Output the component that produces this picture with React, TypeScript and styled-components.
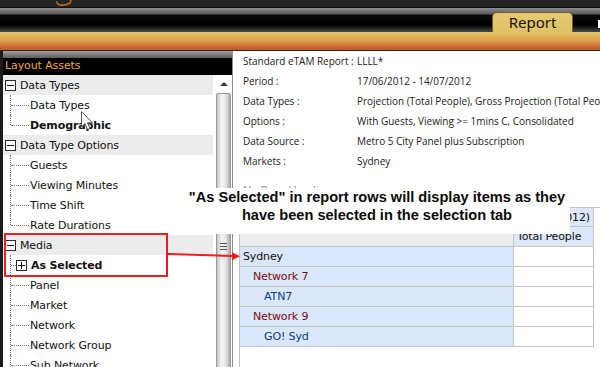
import React from "react";
import styled, { createGlobalStyle } from "styled-components";

const Global = createGlobalStyle`
  html, body { margin: 0; padding: 0; background: #ffffff; }
  #root { width: 600px; height: 367px; }
`;

const Frame = styled.div`
  position: relative;
  width: 600px;
  height: 367px;
  overflow: hidden;
  display: flex;
  flex-direction: column;
  background: #ffffff;
  font-family: "DejaVu Sans", sans-serif;
`;

const TitleStrip = styled.div`
  height: 7px;
  background: #232323;
  border-bottom: 1px solid #0e0e0e;
  display: flex;
  padding-left: 54px;
`;

const TabStrip = styled.div`
  height: 24px;
  display: flex;
  justify-content: flex-end;
  align-items: flex-end;
  background: linear-gradient(
    #8e8e8e 0px,
    #5a5a5a 6px,
    #0a0a0a 7px,
    #000000 17px,
    #4a4a4a 24px
  );
`;

const Tab = styled.div`
  box-sizing: border-box;
  width: 81px;
  height: 20px;
  background: linear-gradient(#e6c972, #e0c168);
  border: 1px solid #7a5c22;
  border-bottom: none;
  border-radius: 5px 5px 0 0;
  font-family: "Noto Sans", sans-serif;
  font-size: 15px;
  line-height: 19px;
  text-align: center;
  color: #141414;
`;

const EdgeMark = styled.div`
  align-self: flex-start;
  margin: 12px 0 0 25px;
  width: 2px;
  height: 8px;
  background: #ffffff;
`;

const OrangeBand = styled.div`
  height: 18px;
  background: linear-gradient(#e7c66a 0%, #e0a452 45%, #c9652e 85%, #c25a28 100%);
  border-bottom: 1px solid #2a2a2a;
`;

const Main = styled.div`
  flex: 1;
  display: flex;
  min-height: 0;
`;

const LeftPanel = styled.div`
  box-sizing: border-box;
  width: 232px;
  flex: none;
  border-left: 3px solid #1c1c1c;
  display: flex;
  flex-direction: column;
  background: #ffffff;
`;

const PanelBevel = styled.div`
  height: 7px;
  background: linear-gradient(#a0a0a0, #5c5c5c);
`;

const PanelTitle = styled.div`
  height: 17px;
  background: #000000;
  color: #f3a445;
  font-size: 11px;
  letter-spacing: -0.1px;
  line-height: 15px;
  padding-left: 2px;
`;

const TreeArea = styled.div`
  flex: 1;
  display: flex;
  min-height: 0;
  overflow: hidden;
`;

const Tree = styled.div`
  width: 210px;
  flex: none;
  display: flex;
  flex-direction: column;
`;

const GroupRow = styled.div`
  height: 20px;
  flex: none;
  display: flex;
  align-items: center;
  gap: 4px;
  padding-left: 2px;
  background: #ececec;
  font-size: 11px;
  letter-spacing: -0.12px;
  color: #111;
`;

const Box = styled.span<{ $plus?: boolean }>`
  box-sizing: border-box;
  width: 11px;
  height: 11px;
  border: 1px solid #2a2a2a;
  background: #fff;
  position: relative;
  flex: none;
  &::before {
    content: "";
    position: absolute;
    left: 1px;
    right: 1px;
    top: 4px;
    height: 1px;
    background: #111;
  }
  &::after {
    content: "";
    display: ${(p) => (p.$plus ? "block" : "none")};
    position: absolute;
    top: 1px;
    bottom: 1px;
    left: 4px;
    width: 1px;
    background: #111;
  }
`;

const ChildRow = styled.div<{ $last?: boolean; $bold?: boolean; $box?: boolean }>`
  height: 20px;
  flex: none;
  position: relative;
  display: flex;
  align-items: center;
  padding-left: ${(p) => (p.$box ? "13px" : "27px")};
  gap: 4px;
  font-size: 11px;
  letter-spacing: -0.12px;
  font-weight: ${(p) => (p.$bold ? 700 : 400)};
  color: #111;
  &::before {
    content: "";
    position: absolute;
    left: 7px;
    top: 0;
    height: ${(p) => (p.$last ? "10px" : "20px")};
    border-left: 1px dotted #7a7a7a;
  }
  &::after {
    content: "";
    position: absolute;
    left: 8px;
    top: 10px;
    width: ${(p) => (p.$box ? "5px" : "18px")};
    border-top: 1px dotted #7a7a7a;
  }
`;

const Scrollbar = styled.div`
  width: 16px;
  margin-left: 3px;
  flex: none;
  display: flex;
  flex-direction: column;
  background: #ffffff;
`;

const ArrowButton = styled.div`
  height: 18px;
  flex: none;
  display: flex;
  align-items: center;
  justify-content: center;
  &::before {
    content: "";
    width: 0;
    height: 0;
    border-left: 4px solid transparent;
    border-right: 4px solid transparent;
    border-bottom: 4px solid #3a3a3a;
  }
`;

const Thumb = styled.div`
  box-sizing: border-box;
  height: 306px;
  flex: none;
  margin: 0 1px 0 0;
  border: 1px solid #9a9a9a;
  border-radius: 2px;
  background: linear-gradient(90deg, #c4c4c4 0%, #f6f6f6 35%, #e4e4e4 70%, #a8a8a8 100%);
  display: flex;
  align-items: center;
  justify-content: center;
`;

const Grip = styled.div`
  width: 7px;
  height: 7px;
  background: repeating-linear-gradient(#555 0px, #555 1px, transparent 1px, transparent 3px);
`;

const Content = styled.div`
  flex: 1;
  display: flex;
  flex-direction: column;
  border-left: 1px solid #8c8c8c;
  padding-left: 10px;
  font-family: "Open Sans", sans-serif;
  min-width: 0;
  overflow: hidden;
`;

const InfoRow = styled.div`
  height: 20px;
  flex: none;
  display: flex;
  align-items: center;
  font-size: 10px;
  letter-spacing: -0.02px;
  color: #1a1a1a;
  white-space: nowrap;
`;

const InfoLabel = styled.span`
  width: 114px;
  flex: none;
`;

const NoHeadings = styled.div`
  height: 36px;
  flex: none;
  box-sizing: border-box;
  padding-top: 10px;
  line-height: 18px;
  font-size: 11px;
  color: #8a8a8a;
`;

const TableWrap = styled.div`
  flex: 1;
  margin-left: -4px;
  border-left: 1px solid #c4c4c4;
  display: flex;
  flex-direction: column;
  font-family: "DejaVu Sans", sans-serif;
  font-size: 11px;
  letter-spacing: -0.12px;
`;

const TRow = styled.div<{ $first?: boolean }>`
  display: grid;
  grid-template-columns: 274px 80px;
  height: 20px;
  flex: none;
  box-sizing: border-box;
  border-top: ${(p) => (p.$first ? "1px solid #c4c4c4" : "none")};
`;

const Cell = styled.div<{ $bg: string; $indent?: number; $color?: string; $right?: boolean }>`
  box-sizing: border-box;
  border-right: 1px solid #c4c4c4;
  border-bottom: 1px solid #c4c4c4;
  background: ${(p) => p.$bg};
  color: ${(p) => p.$color || "#111"};
  padding-left: ${(p) => 3 + (p.$indent || 0)}px;
  padding-right: 3px;
  display: flex;
  align-items: center;
  justify-content: ${(p) => (p.$right ? "flex-end" : "flex-start")};
  white-space: nowrap;
  overflow: hidden;
`;

const Callout = styled.div`
  position: absolute;
  left: 184px;
  top: 188px;
  width: 386px;
  height: 46px;
  background: #ffffff;
  font-family: "Liberation Sans", Arial, sans-serif;
  font-weight: 700;
  font-size: 14.6px;
  line-height: 18px;
  text-align: center;
  white-space: nowrap;
  color: #0a0a0a;
`;

const Overlay = styled.svg`
  position: absolute;
  left: 0;
  top: 0;
  pointer-events: none;
`;

const Cursor = styled.svg`
  position: absolute;
  left: 81px;
  top: 111px;
  pointer-events: none;
`;

const dataGroup = ["Data Types", "Demographic"];
const optionGroup = ["Guests", "Viewing Minutes", "Time Shift", "Rate Durations"];
const mediaGroup = ["Panel", "Market", "Network", "Network Group", "Sub Network"];

const info: [string, string][] = [
  ["Standard eTAM Report :", "LLLL*"],
  ["Period :", "17/06/2012 - 14/07/2012"],
  ["Data Types :", "Projection (Total People), Gross Projection (Total People)"],
  ["Options :", "With Guests, Viewing >= 1mins C, Consolidated"],
  ["Data Source :", "Metro 5 City Panel plus Subscription"],
  ["Markets :", "Sydney"],
];

const rows: { label: string; indent: number; color: string }[] = [
  { label: "Sydney", indent: 0, color: "#111111" },
  { label: "Network 7", indent: 10, color: "#7c0a0a" },
  { label: "ATN7", indent: 21, color: "#0b3b82" },
  { label: "Network 9", indent: 10, color: "#7c0a0a" },
  { label: "GO! Syd", indent: 21, color: "#0b3b82" },
];

export default function App() {
  return (
    <>
      <Global />
      <Frame>
        <TitleStrip>
          <svg width="20" height="7" viewBox="0 0 20 7">
            <path d="M3 1.5 C 2 5, 9 6.5, 15 3.5 C 17.5 2, 17 0, 16 -1" fill="none" stroke="#c8671f" strokeWidth="1.6" />
          </svg>
        </TitleStrip>
        <TabStrip>
          <Tab>Report</Tab>
          <EdgeMark />
        </TabStrip>
        <OrangeBand />
        <Main>
          <LeftPanel>
            <PanelBevel />
            <PanelTitle>Layout Assets</PanelTitle>
            <TreeArea>
              <Tree>
                <GroupRow>
                  <Box />
                  Data Types
                </GroupRow>
                {dataGroup.map((t, i) => (
                  <ChildRow key={t} $last={i === dataGroup.length - 1} $bold={t === "Demographic"}>
                    {t}
                  </ChildRow>
                ))}
                <GroupRow>
                  <Box />
                  Data Type Options
                </GroupRow>
                {optionGroup.map((t, i) => (
                  <ChildRow key={t} $last={i === optionGroup.length - 1}>
                    {t}
                  </ChildRow>
                ))}
                <GroupRow>
                  <Box />
                  Media
                </GroupRow>
                <ChildRow $box $bold>
                  <Box $plus />
                  As Selected
                </ChildRow>
                {mediaGroup.map((t) => (
                  <ChildRow key={t}>{t}</ChildRow>
                ))}
              </Tree>
              <Scrollbar>
                <ArrowButton />
                <Thumb>
                  <Grip />
                </Thumb>
              </Scrollbar>
            </TreeArea>
          </LeftPanel>
          <Content>
            {info.map(([l, v]) => (
              <InfoRow key={l}>
                <InfoLabel>{l}</InfoLabel>
                <span>{v}</span>
              </InfoRow>
            ))}
            <NoHeadings>No Page Headings</NoHeadings>
            <TableWrap>
              <TRow $first>
                <Cell $bg="#ececec" />
                <Cell $bg="#dce8fa" $right>
                  14/07/2012)
                </Cell>
              </TRow>
              <TRow>
                <Cell $bg="#ececec" />
                <Cell $bg="#dce8fa">Total People</Cell>
              </TRow>
              {rows.map((r) => (
                <TRow key={r.label}>
                  <Cell $bg="#dae6f9" $indent={r.indent} $color={r.color}>
                    {r.label}
                  </Cell>
                  <Cell $bg="#ffffff" />
                </TRow>
              ))}
            </TableWrap>
          </Content>
        </Main>
        <Callout>
          "As Selected" in report rows will display items as they
          <br />
          have been selected in the selection tab
        </Callout>
        <Overlay width="600" height="367" viewBox="0 0 600 367">
          <rect x="5" y="234" width="162" height="42" fill="none" stroke="#ee1c1c" strokeWidth="2" />
          <line x1="168" y1="254" x2="233" y2="256" stroke="#ee1c1c" strokeWidth="2" />
          <polygon points="240,256.2 232,252.2 232,260.2" fill="#ee1c1c" />
        </Overlay>
        <Cursor width="13" height="20" viewBox="0 0 13 20">
          <path
            d="M0.5 0.5 L0.5 16 L4 12.5 L6.5 18.5 L9 17.5 L6.5 11.8 L11.5 11.8 Z"
            fill="#ffffff"
            stroke="#555"
            strokeWidth="1"
            strokeLinejoin="round"
          />
        </Cursor>
      </Frame>
    </>
  );
}
